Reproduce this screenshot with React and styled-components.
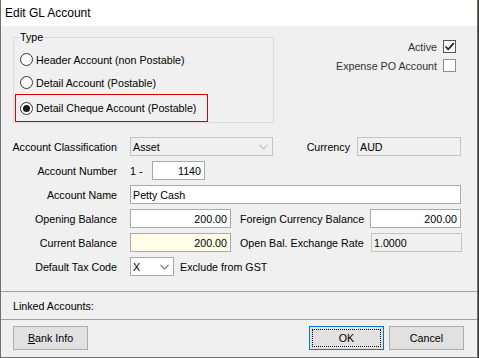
import React from 'react';
import styled, { createGlobalStyle } from 'styled-components';

const GlobalStyle = createGlobalStyle`
  html, body {
    margin: 0;
    padding: 0;
    background: #3b3a2c;
  }
  body {
    font-family: "Liberation Sans", Arial, sans-serif;
    font-size: 10.7px;
    color: #000;
  }
`;

// window frame
const Window = styled.div`
  width: 478px;
  height: 358px;
  box-sizing: border-box;
  border: 1px solid #6f6f6f;
  border-top: none;
  background: #f0f0f0;
  display: flex;
  flex-direction: column;
  overflow: hidden;
`;

const TitleBar = styled.div`
  height: 26px;
  flex: none;
  background: #fff;
  display: flex;
  align-items: center;
  padding-left: 4px;
  font-size: 12px;
  color: #000;
`;

const Body = styled.div`
  flex: 1;
  display: flex;
  flex-direction: column;
`;

const TopSection = styled.div`
  display: flex;
  justify-content: space-between;
  padding: 5px 21px 0 12px;
`;

const GroupBox = styled.fieldset`
  width: 261px;
  box-sizing: border-box;
  margin: 0;
  padding: 5px 0 0 0;
  border: 1px solid #dcdcdc;
`;

const Legend = styled.legend`
  margin-left: 5px;
  padding: 0 1px;
  font-size: 10.7px;
`;

const RadioRow = styled.div`
  display: flex;
  align-items: center;
  gap: 3px;
  height: ${p => (p.$boxed ? '26px' : '23px')};
  padding-left: ${p => (p.$boxed ? '4px' : '6px')};
  margin-left: ${p => (p.$boxed ? '1px' : '0')};
  width: ${p => (p.$boxed ? '187px' : 'auto')};
  border: ${p => (p.$boxed ? '1px solid #e00000' : 'none')};
`;

const RadioCircle = styled.span`
  width: 13px;
  height: 13px;
  box-sizing: border-box;
  border-radius: 50%;
  border: 1px solid #333;
  background: #fff;
  display: flex;
  align-items: center;
  justify-content: center;
  flex: none;

  &::after {
    content: '';
    display: ${p => (p.$checked ? 'block' : 'none')};
    width: 7px;
    height: 7px;
    border-radius: 50%;
    background: #1a1a1a;
  }
`;

const FlagColumn = styled.div`
  display: flex;
  flex-direction: column;
  align-items: flex-end;
  gap: 6px;
  padding-top: 9px;
`;

const FlagRow = styled.label`
  display: flex;
  align-items: center;
  gap: 6px;
  color: #333;
`;

const CheckBox = styled.span`
  width: 13px;
  height: 13px;
  box-sizing: border-box;
  border: 1px solid ${p => (p.$checked ? '#555' : '#8f8f8f')};
  background: #fff;
  display: flex;
  align-items: center;
  justify-content: center;
`;

const FormGrid = styled.div`
  display: grid;
  grid-template-columns: 104px 1fr;
  column-gap: 13px;
  row-gap: 5px;
  margin: 14px 0 0 12px;
`;

const Label = styled.div`
  height: 19px;
  display: flex;
  align-items: center;
  justify-content: flex-end;
  white-space: nowrap;
`;

const Field = styled.div`
  display: flex;
  align-items: center;
  height: 19px;
`;

const TextBox = styled.div`
  width: ${p => p.$w}px;
  height: ${p => p.$h || 19}px;
  box-sizing: border-box;
  border: 1px solid ${p => (p.$disabled ? '#c4c4c4' : '#a9a9a9')};
  background: ${p => (p.$disabled ? '#f0f0f0' : p.$tint ? '#fffde8' : '#fff')};
  display: flex;
  align-items: center;
  justify-content: ${p => (p.$right ? 'flex-end' : 'flex-start')};
  padding: 0 3px 0 2px;
  margin-left: ${p => p.$ml || 0}px;
  flex: none;
`;

const Combo = styled(TextBox)`
  justify-content: space-between;
  padding-right: 4px;
`;

const SideLabel = styled.div`
  width: ${p => p.$w}px;
  text-align: ${p => (p.$right ? 'right' : 'left')};
  margin-left: ${p => p.$ml || 0}px;
  white-space: nowrap;
  flex: none;
`;

const Separator = styled.div`
  height: 1px;
  background: #a0a0a0;
  margin-top: ${p => p.$mt || 0}px;
`;

const LinkedRow = styled.div`
  height: 27px;
  display: flex;
  align-items: center;
  padding-left: 12px;
`;

const Footer = styled.div`
  display: flex;
  align-items: center;
  padding: 6px 13px 0 12px;
  gap: 5px;
`;

const Spacer = styled.div`
  flex: 1;
`;

const Button = styled.button`
  width: 75px;
  height: 24px;
  box-sizing: border-box;
  border: 1px solid ${p => (p.$default ? '#0078d7' : '#adadad')};
  background: #e1e1e1;
  font-family: inherit;
  font-size: 10.7px;
  color: #000;
  padding: 0;
  position: relative;

  &::after {
    content: '';
    display: ${p => (p.$default ? 'block' : 'none')};
    position: absolute;
    inset: 2px;
    border: 1px dotted #000;
  }

  u {
    text-decoration: underline;
  }
`;

const Chevron = ({ color }) => (
  <svg width="9" height="6" viewBox="0 0 9 6">
    <polyline points="0.5,0.8 4.5,4.8 8.5,0.8" fill="none" stroke={color} strokeWidth="1.2" />
  </svg>
);

const Tick = () => (
  <svg width="11" height="11" viewBox="0 0 11 11">
    <path d="M1.5 5.5 L4.2 8.3 L9.8 2.2" fill="none" stroke="#222" strokeWidth="1.8" />
  </svg>
);

const types = [
  { label: 'Header Account (non Postable)' },
  { label: 'Detail Account (Postable)' },
  { label: 'Detail Cheque Account (Postable)', checked: true },
];

export default function App() {
  return (
    <>
      <GlobalStyle />
      <Window>
        <TitleBar>Edit GL Account</TitleBar>
        <Body>
          <TopSection>
            <GroupBox>
              <Legend>Type</Legend>
              {types.map(t => (
                <RadioRow key={t.label} $boxed={t.checked}>
                  <RadioCircle $checked={t.checked} />
                  {t.label}
                </RadioRow>
              ))}
            </GroupBox>
            <FlagColumn>
              <FlagRow>
                Active
                <CheckBox $checked>
                  <Tick />
                </CheckBox>
              </FlagRow>
              <FlagRow>
                Expense PO Account
                <CheckBox />
              </FlagRow>
            </FlagColumn>
          </TopSection>

          <FormGrid>
            <Label>Account Classification</Label>
            <Field>
              <Combo $w={143} $disabled>
                Asset
                <Chevron color="#c2c2c2" />
              </Combo>
              <SideLabel $w={77} $right>Currency</SideLabel>
              <TextBox $w={104} $ml={7} $disabled>AUD</TextBox>
            </Field>

            <Label>Account Number</Label>
            <Field>
              <SideLabel $w={22}>1 -</SideLabel>
              <TextBox $w={53} $right>1140</TextBox>
            </Field>

            <Label>Account Name</Label>
            <Field>
              <TextBox $w={331}>Petty Cash</TextBox>
            </Field>

            <Label>Opening Balance</Label>
            <Field>
              <TextBox $w={101} $right>200.00</TextBox>
              <SideLabel $w={122} $ml={9}>Foreign Currency Balance</SideLabel>
              <TextBox $w={91} $ml={8} $right>200.00</TextBox>
            </Field>

            <Label>Current Balance</Label>
            <Field>
              <TextBox $w={101} $right $tint>200.00</TextBox>
              <SideLabel $w={122} $ml={9}>Open Bal. Exchange Rate</SideLabel>
              <TextBox $w={91} $ml={9} $disabled>1.0000</TextBox>
            </Field>

            <Label>Default Tax Code</Label>
            <Field>
              <Combo $w={44}>
                X
                <Chevron color="#777" />
              </Combo>
              <SideLabel $ml={6}>Exclude from GST</SideLabel>
            </Field>
          </FormGrid>

          <Separator $mt={15} />
          <LinkedRow>Linked Accounts:</LinkedRow>
          <Separator />
          <Footer>
            <Button>
              <u>B</u>ank Info
            </Button>
            <Spacer />
            <Button $default>OK</Button>
            <Button>Cancel</Button>
          </Footer>
        </Body>
      </Window>
    </>
  );
}
